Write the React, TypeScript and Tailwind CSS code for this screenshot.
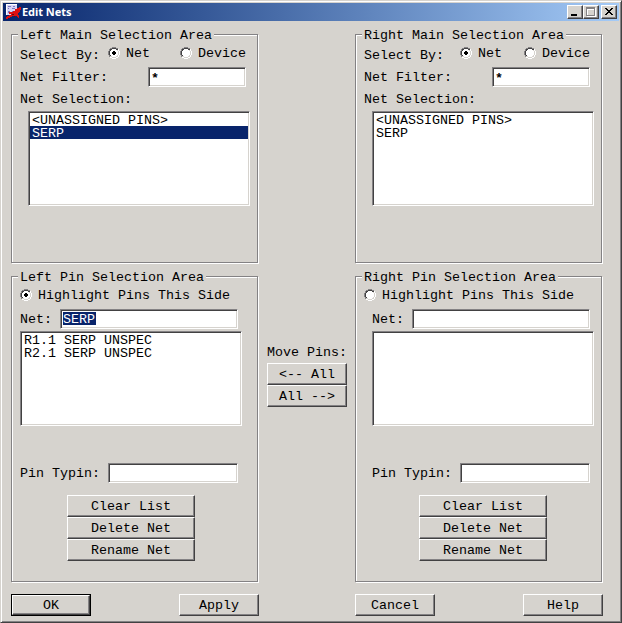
import type { ReactNode } from "react";

const SUNKEN =
  "border border-t-[#848284] border-l-[#848284] border-b-white border-r-white bg-white shadow-[inset_1px_1px_0_#424142,inset_-1px_-1px_0_#d6d3ce]";
const RAISED =
  "border border-t-white border-l-white border-b-[#424142] border-r-[#424142] bg-[#d6d3ce] shadow-[inset_-1px_-1px_0_#848284]";

const RADIO = [
  "    gggg    ",
  "  ggddddgg  ",
  " gddwwwwddw ",
  " gdwwwwwwlw ",
  "gdwwwwwwwwlw",
  "gdwwwwwwwwlw",
  "gdwwwwwwwwlw",
  "gdwwwwwwwwlw",
  " gdwwwwwwlw ",
  " gllwwwwllw ",
  "  wwllllww  ",
  "    wwww    ",
];
const TONES: Record<string, string> = { g: "#848284", d: "#424142", w: "#ffffff", l: "#d6d3ce" };

function Radio({ on = false }: { on?: boolean }) {
  return (
    <svg width="12" height="12" viewBox="0 0 12 12" shapeRendering="crispEdges" className="mt-0.5 shrink-0">
      {RADIO.flatMap((row, y) =>
        [...row].map((c, x) =>
          c === " " ? null : <rect key={`${x}-${y}`} x={x} y={y} width="1" height="1" fill={TONES[c]} />,
        ),
      )}
      {on && <path d="M5 4h2v1h1v2h-1v1h-2v-1h-1v-2h1z" fill="#000" />}
    </svg>
  );
}

function Button({ children, className = "w-20" }: { children: ReactNode; className?: string }) {
  return (
    <button className={`${RAISED} ${className} flex h-[22px] justify-center pt-0.5 leading-[18px] whitespace-pre`}>
      {children}
    </button>
  );
}

function Group({ title, className, children }: { title: string; className: string; children: ReactNode }) {
  return (
    <section
      className={`${className} flex w-[247px] flex-col items-start border border-[#848284] shadow-[1px_1px_0_#fff,inset_1px_1px_0_#fff]`}
    >
      <h2 className="-mt-2 ml-1.5 h-4 bg-[#d6d3ce] pr-0.5 pl-0.5">{title}</h2>
      {children}
    </section>
  );
}

function Field({ className, children }: { className: string; children?: ReactNode }) {
  return <div className={`${SUNKEN} ${className} h-5 shrink-0 pt-0.5 pl-0.5 leading-[15px]`}>{children}</div>;
}

function List({ items, selected, className }: { items: string[]; selected?: number; className: string }) {
  return (
    <ul className={`${SUNKEN} ${className} h-[95px] w-[222px] shrink-0 p-px leading-[15px]`}>
      {items.map((item, i) => (
        <li key={item} className={`h-[13px] pl-0.5 ${i === selected ? "bg-[#08246b] text-white" : ""}`}>
          {item}
        </li>
      ))}
    </ul>
  );
}

function Column({ right = false }: { right?: boolean }) {
  return (
    <div className="flex flex-col gap-[13px]">
      <Group title={right ? "Right Main Selection Area" : "Left Main Selection Area"} className="h-[229px]">
        <div className="mt-0.5 ml-2 flex h-[18px] items-start">
          <span className={`mt-0.5 ${right ? "w-24" : "w-[88px]"}`}>Select By:</span>
          <Radio on />
          <span className={`ml-1.5 ${right ? "w-[46px]" : "w-[54px]"}`}>Net</span>
          <Radio />
          <span className="ml-1.5">Device</span>
        </div>
        <div className="mt-1 ml-2 flex">
          <span className="mt-0.5 w-32">Net Filter:</span>
          <Field className="w-[98px]">
            <b className="block pt-px">*</b>
          </Field>
        </div>
        <span className="mt-1 ml-2 h-4">Net Selection:</span>
        <List className="mt-1 ml-4" items={["<UNASSIGNED PINS>", "SERP"]} selected={right ? undefined : 1} />
      </Group>
      <Group title={right ? "Right Pin Selection Area" : "Left Pin Selection Area"} className="h-[306px]">
        <div className="mt-0.5 ml-2 flex h-4 items-start">
          <Radio on={!right} />
          <span className="ml-1.5">Highlight Pins This Side</span>
        </div>
        <div className={`mt-1.5 flex ${right ? "ml-4" : "ml-2"}`}>
          <span className="mt-0.5 w-10">Net:</span>
          <Field className="w-[178px]">
            {!right && <span className="block h-[13px] w-[33px] bg-[#08246b] text-white">SERP</span>}
          </Field>
        </div>
        <List
          className={`mt-0.5 ${right ? "ml-4" : "ml-2"}`}
          items={right ? [] : ["R1.1 SERP UNSPEC", "R2.1 SERP UNSPEC"]}
        />
        <div className={`mt-[37px] flex ${right ? "ml-4" : "ml-2"}`}>
          <span className="mt-0.5 w-[88px]">Pin Typin:</span>
          <Field className="w-[130px]" />
        </div>
        <div className={`mt-3 flex flex-col ${right ? "ml-[63px]" : "ml-[55px]"}`}>
          <Button className="w-32">Clear List</Button>
          <Button className="w-32">Delete Net</Button>
          <Button className="w-32">Rename Net</Button>
        </div>
      </Group>
    </div>
  );
}

function AppIcon() {
  return (
    <svg width="16" height="16" viewBox="0 0 16 16" shapeRendering="crispEdges" className="ml-0.5">
      <path d="M1 0h11v11H1z" fill="#d6d3f7" />
      <path d="M1 0h11v1H1zM1 0h1v11H1z" fill="#fff" />
      <path d="M3 2h3v1H3zM8 2h2v1H8zM3 4h1v1H3zM7 4h3v1H7zM3 7h2v2H3zM7 7h3v1H7z" fill="#7b79bd" />
      <path
        d="M15 3h-1v1h-2v1h-2v2H8v1H4v2h2v1H4v1H2v1H1v2h2v-1h2v-1h2v-1h5v1h1v1h1v-3h-1v-2h1V8h1V6h1V5h1V3z"
        fill="#de1010"
      />
      <path d="M7 10h2v1H7zM9 12h1v1H9z" fill="#630810" />
    </svg>
  );
}

export default function App() {
  const control = `${RAISED} flex h-3.5 w-4`;
  return (
    <div className="h-[623px] w-[622px] overflow-hidden border border-t-[#d6d3ce] border-r-[#424142] border-b-[#424142] border-l-[#d6d3ce] bg-[#d6d3ce] font-['Liberation_Mono','Courier_New',monospace] text-[13.333px] leading-[18px] text-black shadow-[inset_1px_1px_0_#fff,inset_-1px_-1px_0_#848284]">
      <header className="mt-0.5 ml-0.5 flex h-[18px] w-[616px] items-center bg-linear-to-r from-[#08246b] to-[#a5cbf7]">
        <AppIcon />
        <h1 className="ml-px flex-1 font-['Noto_Sans',sans-serif] text-[11px] leading-4 font-bold tracking-[-0.05px] text-white">
          Edit Nets
        </h1>
        <div className={control}>
          <svg width="14" height="12" shapeRendering="crispEdges">
            <path d="M3 8h6v2H3z" />
          </svg>
        </div>
        <div className={control}>
          <svg width="14" height="12" shapeRendering="crispEdges">
            <path d="M3 2h9v9H3zM4 4v6h7V4z" fill="#fff" fillRule="evenodd" />
            <path d="M2 1h9v9H2zM3 3v6h7V3z" fill="#848284" fillRule="evenodd" />
          </svg>
        </div>
        <div className={`${control} mr-0.5 ml-0.5`}>
          <svg width="14" height="12" shapeRendering="crispEdges">
            <path d="M3 2h2v1h1v1h2v-1h1v-1h2v1h-1v1h-1v1h-1v1h1v1h1v1h1v1h-2v-1h-1v-1h-2v1h-1v1h-2v-1h1v-1h1v-1h1v-1h-1v-1h-1v-1h-1z" />
          </svg>
        </div>
      </header>
      <main className="mt-[13px] ml-2.5 flex">
        <Column />
        <div className="mt-[310px] mr-2 ml-[9px] w-20">
          <p className="mb-[3px] h-4 whitespace-nowrap">Move Pins:</p>
          <Button>{"<-- All"}</Button>
          <Button>{"All -->"}</Button>
        </div>
        <Column right />
      </main>
      <footer className="mt-3 ml-2.5 flex">
        <div className="w-[168px]">
          <div className="h-[22px] w-20 border border-black">
            <button className={`${RAISED} flex h-5 w-full justify-center pt-px leading-[18px]`}>OK</button>
          </div>
        </div>
        <div className="w-44">
          <Button>Apply</Button>
        </div>
        <div className="w-[168px]">
          <Button>Cancel</Button>
        </div>
        <Button>Help</Button>
      </footer>
    </div>
  );
}
